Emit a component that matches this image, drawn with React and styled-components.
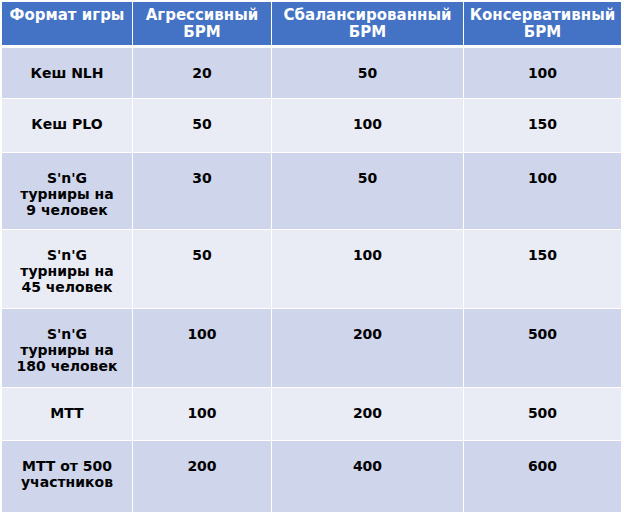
import React from 'react'
import styled, { createGlobalStyle } from 'styled-components'

const GlobalStyle = createGlobalStyle`
  body {
    margin: 0;
    background: #ffffff;
    font-family: "DejaVu Sans", "Liberation Sans", Arial, sans-serif;
  }
`;

const columns = [
  { title: ['Формат игры'], width: 131 },
  { title: ['Агрессивный', 'БРМ'], width: 139 },
  { title: ['Сбалансированный', 'БРМ'], width: 192 },
  { title: ['Консервативный', 'БРМ'], width: 157 },
];

const rows = [
  { name: ['Кеш NLH'], values: [20, 50, 100], height: 51 },
  { name: ['Кеш PLO'], values: [50, 100, 150], height: 54 },
  { name: ["S'n'G", 'турниры на', '9 человек'], values: [30, 50, 100], height: 77 },
  { name: ["S'n'G", 'турниры на', '45 человек'], values: [50, 100, 150], height: 79 },
  { name: ["S'n'G", 'турниры на', '180 человек'], values: [100, 200, 500], height: 79 },
  { name: ['MTT'], values: [100, 200, 500], height: 53 },
  { name: ['MTT от 500', 'участников'], values: [200, 400, 600], height: 72 },
];

export default function App() {
  return (
    <>
      <GlobalStyle />
      <Page>
        <Table>
          <colgroup>
            {columns.map((c, i) => <col key={i} width={c.width} />)}
          </colgroup>
          <thead>
            <tr>
              {columns.map((c, i) => (
                <HeadCell key={i}>
                  {c.title.map((line, j) => <Line key={j}>{line}</Line>)}
                </HeadCell>
              ))}
            </tr>
          </thead>
          <tbody>
            {rows.map((row, i) => (
              <Row key={i} $dark={i % 2 === 0} $h={row.height}>
                <Cell>
                  {row.name.map((line, j) => <Line key={j}>{line}</Line>)}
                </Cell>
                {row.values.map((v, j) => (
                  <Cell key={j}>{v}</Cell>
                ))}
              </Row>
            ))}
          </tbody>
        </Table>
      </Page>
    </>
  )
}

const Page = styled.div`
  padding: 2px 0 0 2px;
`;

const Table = styled.table`
  width: 619px;
  table-layout: fixed;
  border-collapse: separate;
  border-spacing: 0;
`;

const HeadCell = styled.th`
  height: 46px;
  padding: 5px 0 0;
  box-sizing: border-box;
  vertical-align: top;
  background: #4472c4;
  color: #ffffff;
  font-size: 15px;
  line-height: 17px;
  font-weight: 700;
  text-align: center;
  border-right: 1px solid #ffffff;
  border-bottom: 3px solid #ffffff;
  &:last-child{
    border-right: none;
  }
`;

const Row = styled.tr`
  height: ${p => p.$h}px;
  background: ${p => (p.$dark ? '#cfd5ea' : '#e9ebf5')};
`;

const Cell = styled.td`
  padding: 17px 0 0;
  vertical-align: top;
  color: #000000;
  font-size: 14px;
  line-height: 16px;
  font-weight: 700;
  text-align: center;
  border-right: 1px solid #ffffff;
  border-bottom: 1px solid #ffffff;
  &:last-child{
    border-right: none;
  }
`;

const Line = styled.div`
  white-space: nowrap;
`;
